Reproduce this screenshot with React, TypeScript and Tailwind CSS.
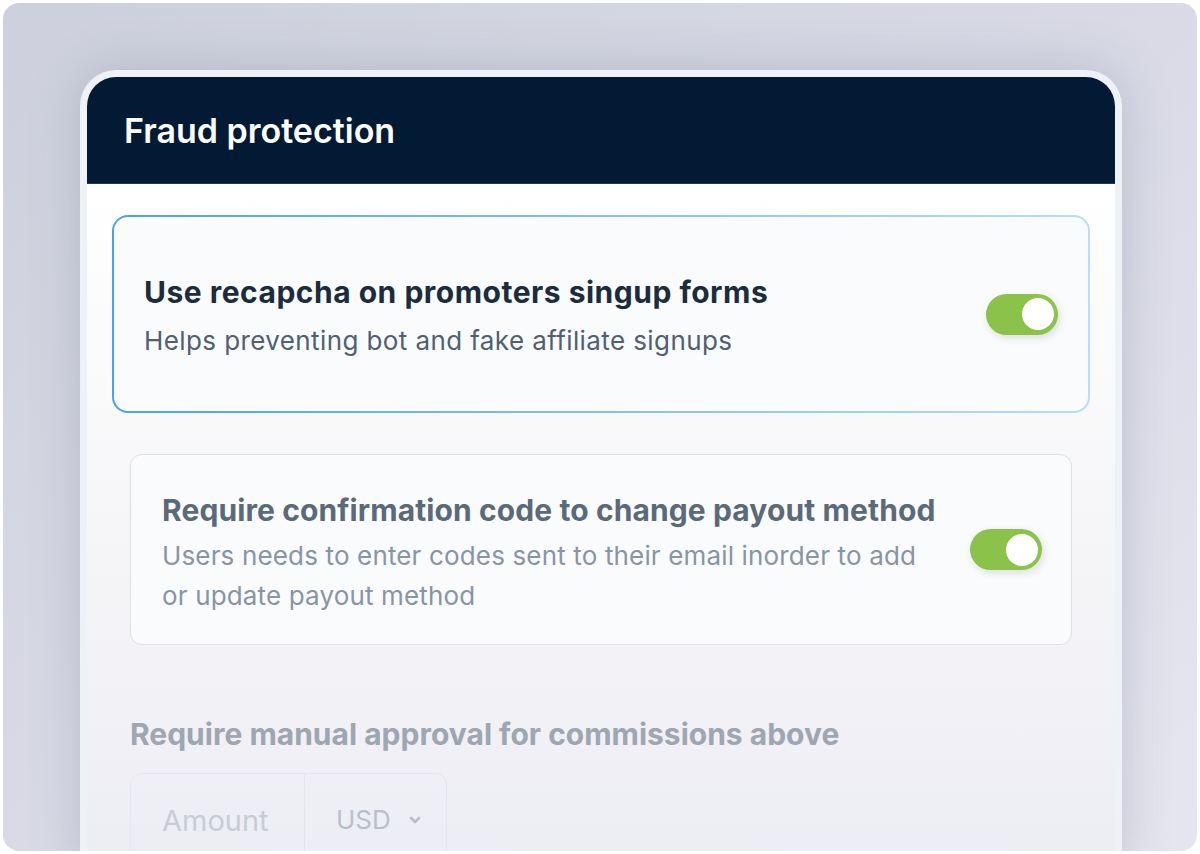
import React from "react";

function Toggle() {
    return <div className="w-[72px] h-[41px] rounded-full bg-[#8bc34a] flex items-center justify-end pr-[4px] shrink-0 shadow-[2px_3px_8px_rgba(0,0,0,0.12)]">
        <div className="w-[32px] h-[32px] rounded-full bg-white"></div>
    </div>
}

export default function App() {
    return <div className="h-[854px] w-[1200px] bg-white p-[3px] overflow-hidden" style={{fontFamily: "Inter, 'Noto Sans', sans-serif"}}>
        <div className="h-full w-full rounded-[16px] overflow-hidden bg-linear-to-br from-[#cdd0dc] via-[#d9dae6] to-[#e6e6f0] pt-[67px] pl-[77px]">
            <div className="w-[1042px] h-[800px] rounded-t-[36px] bg-[#eef1f6] p-[7px] pb-0 shadow-[0_0_50px_rgba(110,112,140,0.3)]">
                <header className="h-[107px] rounded-t-[29px] bg-[#021a33] flex items-center px-[37px] border-b border-[#1d3550]">
                    <h1 className="text-white text-[34px] font-semibold tracking-[0px]">Fraud protection</h1>
                </header>
                <div className="h-[700px] bg-linear-to-b from-white via-[#f6f6f8] to-[#ececf4] px-[25px] pt-[31px]">
                    <div className="rounded-[16px] p-[2px] bg-linear-to-r from-[#4aa2ec] to-[#b7dcfc]">
                        <div className="h-[194px] rounded-[14px] bg-[#fafbfd] flex items-center justify-between pl-[30px] pr-[30px]">
                            <div className="flex flex-col pt-[4px]">
                                <h2 className="text-[30px] leading-[38px] font-bold text-[#1b2d3d] tracking-[0.5px]">Use recapcha on promoters singup forms</h2>
                                <p className="text-[26px] leading-[36px] mt-[12px] text-[#4f6074] tracking-[0.4px]">Helps preventing bot and fake affiliate signups</p>
                            </div>
                            <Toggle />
                        </div>
                    </div>

                    <div className="mx-[18px] mt-[41px] h-[191px] rounded-[12px] border border-[#dfe0e3] bg-[#fafbfd] flex items-center justify-between pl-[31px] pr-[29px]">
                        <div className="flex flex-col w-[790px] pt-[8px]">
                            <h2 className="text-[30px] leading-[38px] font-bold text-[#5b6a79] tracking-[0.1px]">Require confirmation code to change payout method</h2>
                            <p className="text-[26px] leading-[40px] mt-[7px] text-[#8795a5] tracking-[0.15px] w-[770px]">Users needs to enter codes sent to their email inorder to add or update payout method</p>
                        </div>
                        <Toggle />
                    </div>

                    <div className="mx-[18px] mt-[70px]">
                        <h3 className="text-[30px] leading-[38px] font-bold text-[#9ea6b1] tracking-[0px]">Require manual approval for commissions above</h3>
                        <div className="mt-[20px] w-[317px] h-[100px] rounded-[12px] border border-[#e6e7ee] flex">
                            <div className="w-[174px] border-r border-[#e4e5ec] flex items-start pt-[25px] pl-[31px]">
                                <span className="text-[29px] text-[#c7ccd5]">Amount</span>
                            </div>
                            <div className="flex-1 flex items-start pt-[26px] pl-[31px] gap-[16px]">
                                <span className="text-[26px] text-[#b9bfc9]">USD</span>
                                <svg width="16" height="16" viewBox="0 0 24 24" fill="none" stroke="#b9bfc9" strokeWidth="4" strokeLinecap="round" strokeLinejoin="round" className="mt-[12px]">
                                    <path d="M6 9l6 6 6-6"/>
                                </svg>
                            </div>
                        </div>
                    </div>
                </div>
            </div>
        </div>
    </div>
}
